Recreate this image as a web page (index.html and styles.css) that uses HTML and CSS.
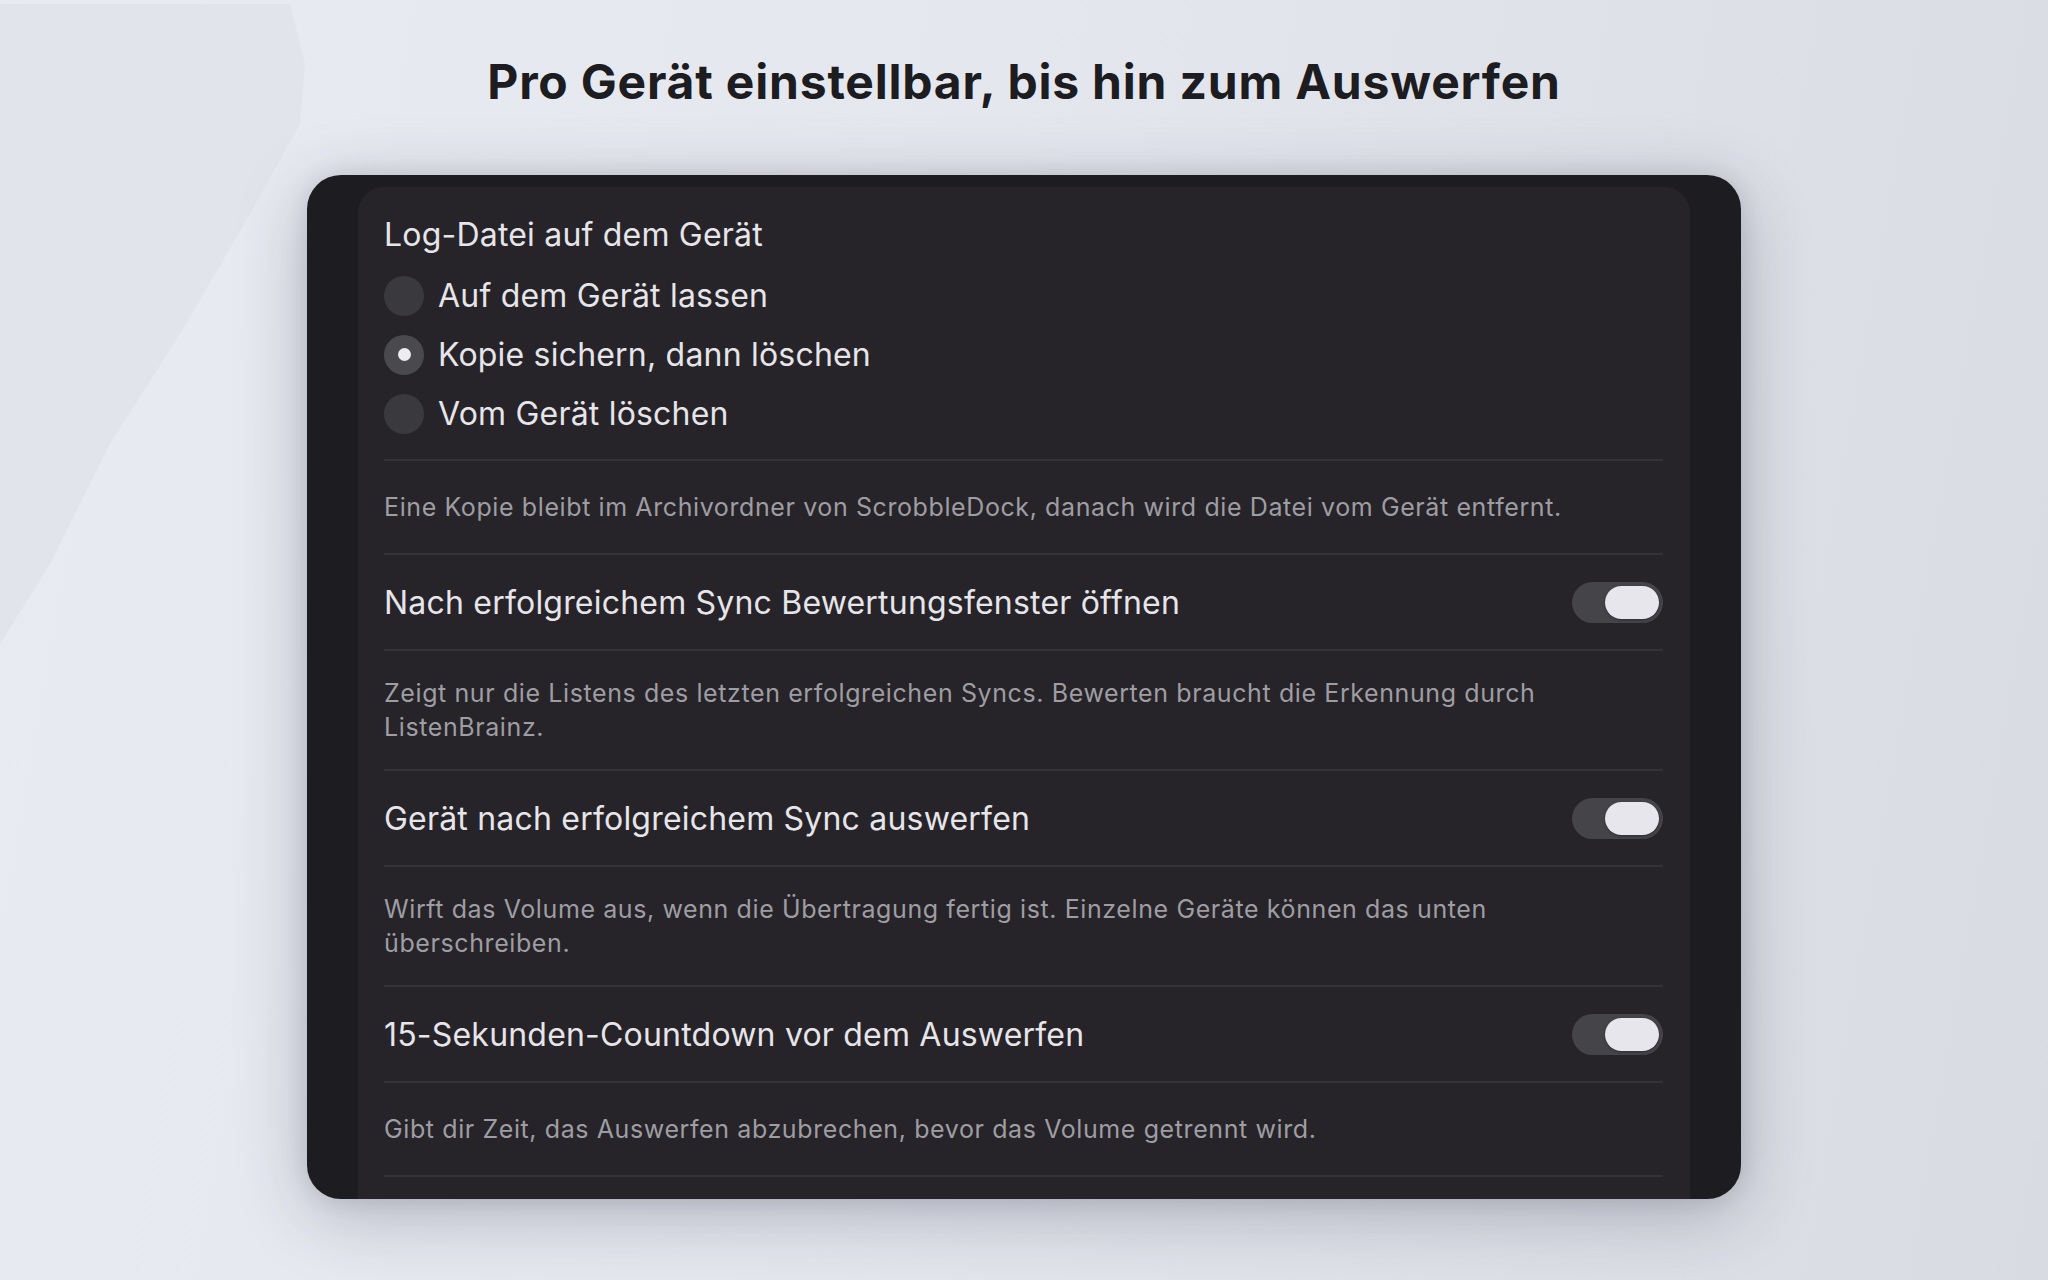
FILE: index.html
```html
<!DOCTYPE html>
<html lang="de">
<head>
  <meta charset="UTF-8" />
  <meta name="viewport" content="width=device-width, initial-scale=1.0" />
  <title>Geräte-Einstellungen</title>
  <link rel="stylesheet" href="styles.css">
</head>
<body>
  <h1 class="headline">Pro Gerät einstellbar, bis hin zum Auswerfen</h1>

  <div class="window">
    <div class="panel">
      <div class="group">
        <div class="group-title">Log-Datei auf dem Gerät</div>
        <div class="radio-list">
          <div class="radio-row"><span class="radio"></span>Auf dem Gerät lassen</div>
          <div class="radio-row"><span class="radio checked"></span>Kopie sichern, dann löschen</div>
          <div class="radio-row"><span class="radio"></span>Vom Gerät löschen</div>
        </div>
      </div>

      <div class="note">Eine Kopie bleibt im Archivordner von ScrobbleDock, danach wird die Datei vom Gerät entfernt.</div>

      <div class="toggle-row">
        <span>Nach erfolgreichem Sync Bewertungsfenster öffnen</span>
        <span class="switch"><span class="knob"></span></span>
      </div>
      <div class="note">Zeigt nur die Listens des letzten erfolgreichen Syncs. Bewerten braucht die Erkennung durch ListenBrainz.</div>

      <div class="toggle-row">
        <span>Gerät nach erfolgreichem Sync auswerfen</span>
        <span class="switch"><span class="knob"></span></span>
      </div>
      <div class="note">Wirft das Volume aus, wenn die Übertragung fertig ist. Einzelne Geräte können das unten überschreiben.</div>

      <div class="toggle-row">
        <span>15-Sekunden-Countdown vor dem Auswerfen</span>
        <span class="switch"><span class="knob"></span></span>
      </div>
      <div class="note">Gibt dir Zeit, das Auswerfen abzubrechen, bevor das Volume getrennt wird.</div>
    </div>
  </div>
</body>
</html>
```

FILE: styles.css
```css
html, body {
  margin: 0;
  height: 1280px;
  overflow: hidden;
}
body {
  position: relative;
  background: linear-gradient(100deg, #e9ebf3 0%, #e5e7ef 45%, #d9dbe3 100%);
  font-family: Inter, "Noto Sans", sans-serif;
  color: #1c1c21;
}
/* soft darker patch in the upper left of the backdrop */
body::before {
  content: "";
  position: absolute;
  left: 0;
  top: 4px;
  width: 310px;
  height: 640px;
  background: #e2e4ec;
  clip-path: polygon(0 0, 290px 0, 305px 60px, 300px 120px, 250px 210px, 180px 330px, 110px 440px, 50px 560px, 0 640px);
  z-index: -1;
}
.headline {
  margin: 54px 0 0;
  font-size: 48px;
  line-height: 56px;
  font-weight: 700;
  text-align: center;
  letter-spacing: 0.8px;
}
.window {
  width: 1434px;
  height: 1024px;
  margin: 65px auto 0;
  background: #1d1c20;
  border-radius: 34px;
  overflow: hidden;
  box-shadow: 0 16px 70px rgba(40, 42, 60, 0.28), 0 0 22px rgba(40, 42, 60, 0.12);
}
.panel {
  margin: 12px 51px 0;
  padding: 0 27px 0 26px;
  height: 1012px;
  background: #262428;
  border-radius: 26px 26px 0 0;
  color: #e6e5ea;
  font-size: 32px;
  letter-spacing: 0.2px;
}
.group {
  padding: 30px 0 16px;
  border-bottom: 2px solid #333236;
}
.group-title {
  line-height: 36px;
  margin-bottom: 13px;
}
.radio-row {
  display: flex;
  align-items: center;
  gap: 14px;
  height: 59px;
}
.radio {
  width: 40px;
  height: 40px;
  border-radius: 50%;
  background: #3a393d;
  display: flex;
  align-items: center;
  justify-content: center;
}
.radio.checked {
  background: #4a494e;
}
.radio.checked::after {
  content: "";
  width: 13px;
  height: 13px;
  border-radius: 50%;
  background: #ececf1;
}
.note {
  display: flex;
  align-items: center;
  min-height: 94px;
  box-sizing: border-box;
  padding: 25px 0;
  font-size: 25px;
  line-height: 34px;
  color: #9e9da3;
  letter-spacing: 0.6px;
  border-bottom: 2px solid #333236;
}
.toggle-row {
  display: flex;
  align-items: center;
  justify-content: space-between;
  min-height: 94px;
  border-bottom: 2px solid #333236;
}
.switch {
  width: 91px;
  height: 41px;
  border-radius: 21px;
  background: #454449;
  display: flex;
  align-items: center;
  justify-content: flex-end;
  padding: 0 4px;
  box-sizing: border-box;
}
.knob {
  width: 54px;
  height: 33px;
  border-radius: 17px;
  background: #e6e6ec;
  box-shadow: 0 1px 3px rgba(0, 0, 0, 0.35);
}
```
